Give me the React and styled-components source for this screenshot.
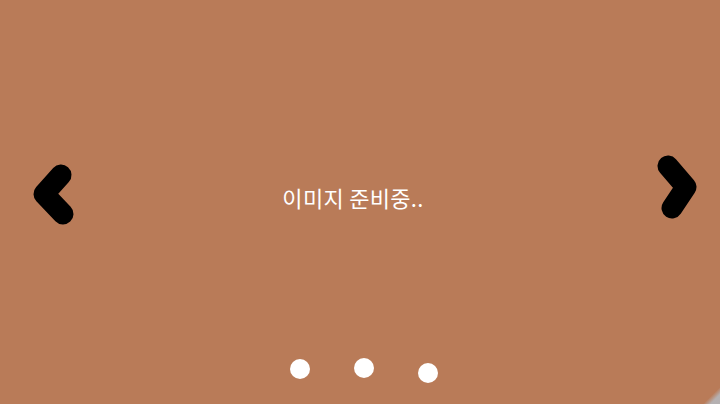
import React from "react";
import styled, { createGlobalStyle } from "styled-components";

const Global = createGlobalStyle`
  html, body { margin: 0; padding: 0; }
  body { font-family: "Noto Sans CJK KR", "Noto Sans", sans-serif; }
`;

const Carousel = styled.div`
  position: relative;
  width: 720px;
  height: 404px;
  background: #b97b58;
  overflow: hidden;
  display: grid;
  grid-template-columns: 90px 1fr 90px;
  grid-template-rows: 1fr 56px;
`;

const Slide = styled.div`
  grid-column: 2;
  grid-row: 1 / span 2;
  display: flex;
  align-items: center;
  justify-content: center;
  padding-bottom: 10px;
  padding-right: 14px;
  color: #ffffff;
  font-size: 22px;
  letter-spacing: 0.3px;
`;

const ArrowButton = styled.button`
  grid-row: 1 / span 2;
  grid-column: ${(p) => (p.$side === "left" ? 1 : 3)};
  align-self: center;
  justify-self: ${(p) => (p.$side === "left" ? "start" : "end")};
  width: 60px;
  height: 80px;
  margin-top: ${(p) => (p.$side === "left" ? "-20px" : "-42px")};
  margin-left: ${(p) => (p.$side === "left" ? "21px" : "0")};
  margin-right: ${(p) => (p.$side === "right" ? "9px" : "0")};
  border: 0;
  background: transparent;
  padding: 0;
  cursor: pointer;
  svg { display: block; }
`;

const Dots = styled.div`
  position: absolute;
  left: 290px;
  top: 359px;
  display: flex;
  gap: 44px;
  align-items: flex-start;
`;

const Dot = styled.span`
  width: 20px;
  height: 20px;
  border-radius: 50%;
  background: #ffffff;
  margin-top: ${(p) => p.$offset || 0}px;
`;

const Corner = styled.div`
  position: absolute;
  right: 0;
  bottom: 0;
  width: 22px;
  height: 16px;
  background: linear-gradient(135deg, transparent 55%, rgba(180,190,200,0.8) 75%);
`;

export default function App() {
  return (
    <>
      <Global />
      <Carousel>
        <ArrowButton $side="left" aria-label="previous">
          <svg width="60" height="80" viewBox="0 0 60 80">
            <polyline points="40,23 23,42 42,62" fill="none" stroke="#000" strokeWidth="21" strokeLinecap="round" strokeLinejoin="round" />
          </svg>
        </ArrowButton>
        <Slide>이미지 준비중..</Slide>
        <ArrowButton $side="right" aria-label="next">
          <svg width="60" height="80" viewBox="0 0 60 80">
            <polyline points="17,25 35,46 21,67" fill="none" stroke="#000" strokeWidth="21" strokeLinecap="round" strokeLinejoin="round" />
          </svg>
        </ArrowButton>
        <Dots>
          <Dot />
          <Dot $offset={-1} />
          <Dot $offset={4} />
        </Dots>
        <Corner />
      </Carousel>
    </>
  );
}
